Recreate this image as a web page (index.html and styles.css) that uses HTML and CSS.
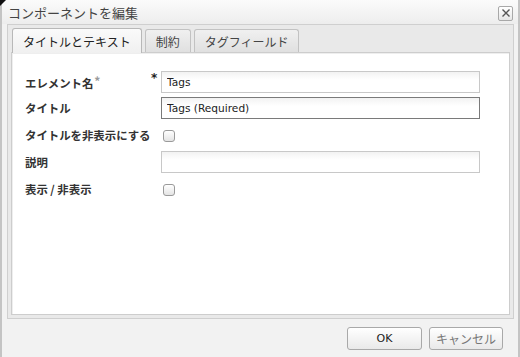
FILE: index.html
```html
<!DOCTYPE html>
<html lang="ja">
<head>
    <meta charset="UTF-8">
    <title>コンポーネントを編集</title>
    <link rel="stylesheet" href="styles.css">
</head>
<body>

<div class="dialog">
    <span class="corner"></span>

    <!-- Title bar -->
    <div class="titlebar">
        <span class="title">コンポーネントを編集</span>
        <button class="close" type="button" aria-label="閉じる">
            <svg width="10" height="10" viewBox="0 0 10 10">
                <path d="M1.5 1.5 L8.5 8.5 M8.5 1.5 L1.5 8.5" stroke="#555" stroke-width="1.4" fill="none"/>
            </svg>
        </button>
    </div>

    <!-- Tab panel -->
    <div class="panel">
        <div class="tabs">
            <div class="tab active">タイトルとテキスト</div>
            <div class="tab">制約</div>
            <div class="tab">タグフィールド</div>
        </div>

        <div class="content">
            <form class="form">
                <div class="row">
                    <label class="label">エレメント名<span class="req">*</span></label>
                    <span class="mark">*</span>
                    <input class="field" type="text" value="Tags">
                </div>
                <div class="row">
                    <label class="label">タイトル</label>
                    <span class="mark"></span>
                    <input class="field focus" type="text" value="Tags (Required)">
                </div>
                <div class="row check">
                    <label class="label">タイトルを非表示にする</label>
                    <span class="mark"></span>
                    <span class="box"></span>
                </div>
                <div class="row">
                    <label class="label">説明</label>
                    <span class="mark"></span>
                    <input class="field" type="text" value="">
                </div>
                <div class="row check">
                    <label class="label">表示 / 非表示</label>
                    <span class="mark"></span>
                    <span class="box"></span>
                </div>
            </form>
        </div>
    </div>

    <!-- Buttons -->
    <div class="footer">
        <button class="btn ok" type="button">OK</button>
        <button class="btn cancel" type="button">キャンセル</button>
    </div>
</div>

</body>
</html>
```

FILE: styles.css
```css
html, body {
    margin: 0;
    padding: 0;
}
body {
    width: 520px;
    height: 357px;
    overflow: hidden;
    font-family: "DejaVu Sans", "Noto Sans CJK JP", sans-serif;
    background-color: #f2f2f2;
}
.dialog {
    position: relative;
    width: 520px;
    height: 357px;
    box-sizing: border-box;
    border-left: 2px solid #c4c4c4;
    border-right: 2px solid #c4c4c4;
    background-color: #f2f2f2;
}
.corner {
    position: absolute;
    left: -2px;
    top: 0;
    width: 0;
    height: 0;
    border-top: 6px solid #111;
    border-right: 6px solid transparent;
}
.titlebar {
    height: 24px;
    display: flex;
    align-items: center;
    justify-content: space-between;
    padding: 0 5px 0 6px;
    background: linear-gradient(#fbfbfb, #ededed);
}
.title {
    font-family: "Noto Sans CJK JP", sans-serif;
    font-size: 13px;
    color: #444;
    margin-top: 1px;
}
.close {
    width: 15px;
    height: 15px;
    padding: 0;
    margin-top: 2px;
    display: flex;
    align-items: center;
    justify-content: center;
    border: 1px solid #a8a8a8;
    border-radius: 2px;
    background: linear-gradient(#ffffff, #e6e6e6);
}
.panel {
    margin: 0 4px 0 5px;
    height: 295px;
    box-sizing: border-box;
    border: 1px solid #cfcfcf;
    background-color: #e9e9e9;
    padding: 0 3px 3px 3px;
    display: flex;
    flex-direction: column;
}
.tabs {
    height: 27px;
    display: flex;
    align-items: flex-end;
    gap: 3px;
    padding-left: 1px;
}
.tab {
    height: 23px;
    box-sizing: border-box;
    padding: 0 10px;
    display: flex;
    align-items: center;
    font-family: "Noto Sans CJK JP", sans-serif;
    font-size: 12px;
    color: #444;
    border: 1px solid #c2c2c2;
    border-bottom: none;
    border-radius: 3px 3px 0 0;
    background: linear-gradient(#f0f0f0, #e0e0e0);
}
.tab.active {
    height: 25px;
    margin-bottom: -1px;
    position: relative;
    color: #222;
    border-color: #b8b8b8;
    background: linear-gradient(#fafafa, #f0f0f0);
}
.content {
    flex: 1;
    background-color: #fff;
    border: 1px solid #cdcdcd;
    box-shadow: inset 1px 1px 0 #eee;
    padding-top: 18px;
}
.form {
    display: flex;
    flex-direction: column;
    gap: 4px;
    padding-left: 13px;
}
.row {
    height: 22px;
    display: flex;
    align-items: center;
}
.row.check {
    height: 24px;
}
.label {
    width: 126px;
    font-family: "Noto Sans CJK JP", sans-serif;
    font-size: 11.4px;
    font-weight: bold;
    color: #333;
    white-space: nowrap;
}
.req {
    color: #9a9a9a;
    font-weight: bold;
    font-size: 12px;
    position: relative;
    top: -2px;
    margin-left: 1px;
}
.mark {
    width: 10px;
    font-size: 12px;
    font-weight: bold;
    color: #222;
    align-self: flex-start;
    line-height: 14px;
}
.field {
    width: 319px;
    height: 22px;
    box-sizing: border-box;
    margin: 0;
    padding: 0 5px;
    border: 1px solid #c8c8c8;
    background: linear-gradient(#f2f2f2, #ffffff 40%);
    font-family: "DejaVu Sans", sans-serif;
    font-size: 10.6px;
    color: #222;
    outline: none;
}
.field.focus {
    border-color: #7a7a7a;
}
.box {
    width: 10px;
    height: 10px;
    margin-left: 2px;
    margin-top: 1px;
    border: 1px solid #9a9a9a;
    border-radius: 3px;
    background: linear-gradient(#ffffff, #e4e4e4);
}
.footer {
    display: flex;
    justify-content: flex-end;
    gap: 7px;
    padding: 8px 15px 0 0;
}
.btn {
    width: 75px;
    height: 23px;
    box-sizing: border-box;
    border: 1px solid #a9a9a9;
    border-radius: 3px;
    background: linear-gradient(#ffffff, #e9e9e9);
    font-family: "DejaVu Sans", "Noto Sans CJK JP", sans-serif;
    font-size: 11px;
    padding: 0;
}
.btn.ok {
    color: #222;
}
.btn.cancel {
    width: 74px;
    color: #777;
    font-family: "Noto Sans CJK JP", sans-serif;
    font-size: 12px;
}
```
